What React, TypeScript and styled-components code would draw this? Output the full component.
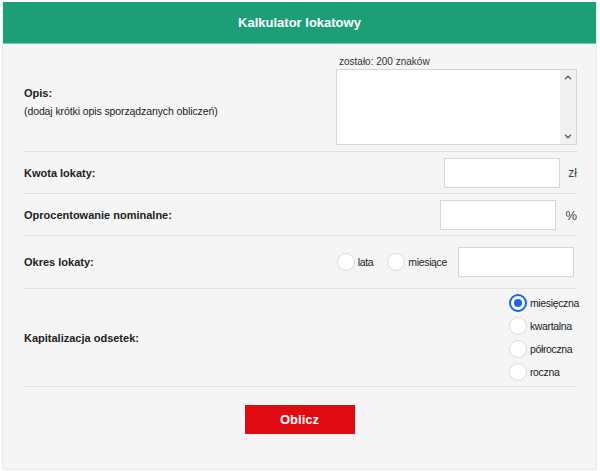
import React, { useState } from "react";
import styled, { createGlobalStyle } from "styled-components";

const Global = createGlobalStyle`
  html, body { margin: 0; padding: 0; background: #ffffff; }
  body { font-family: "Liberation Sans", Arial, sans-serif; color: #222; }
  * { box-sizing: border-box; }
`;

const Card = styled.div`
  margin: 2px 3px 0 2px;
  height: 468px;
  background: #f5f5f5;
  border: 1px solid #e9e9e9;
  border-top: none;
  display: flex;
  flex-direction: column;
`;

const Header = styled.div`
  height: 42px;
  background: #1c9f77;
  border-bottom: 1px solid #62d4ae;
  display: flex;
  align-items: center;
  justify-content: center;
  color: #fff;
  font-weight: bold;
  font-size: 13px;
`;

const Body = styled.div`
  padding: 0 19px 0 21px;
  display: flex;
  flex-direction: column;
`;

const Row = styled.div<{ $pt: number; $pb: number; $pr?: number }>`
  display: flex;
  align-items: center;
  justify-content: space-between;
  padding: ${(p) => p.$pt}px ${(p) => p.$pr ?? 0}px ${(p) => p.$pb}px 0;
  border-bottom: 1px solid #e2e2e2;
`;

const LabelBlock = styled.div`
  display: flex;
  flex-direction: column;
  padding-top: 2px;
`;

const Label = styled.div`
  font-weight: bold;
  font-size: 11px;
  line-height: 18px;
  color: #222;
`;

const Sub = styled.div`
  font-size: 10.5px;
  letter-spacing: -0.1px;
  line-height: 18px;
  color: #222;
`;

const AreaColumn = styled.div`
  display: flex;
  flex-direction: column;
  width: 241px;
`;

const Counter = styled.div`
  font-size: 10px;
  line-height: 12px;
  color: #333;
  padding-left: 3px;
  margin-bottom: 1px;
`;

const AreaBox = styled.div`
  display: flex;
  height: 76px;
  background: #fff;
  border: 1px solid #d6d6d6;
`;

const Area = styled.textarea`
  flex: 1;
  border: none;
  outline: none;
  resize: none;
  background: transparent;
  font-family: inherit;
  font-size: 11px;
  padding: 3px;
`;

const ScrollTrack = styled.div`
  width: 16px;
  background: #f1f1f1;
  display: flex;
  flex-direction: column;
  justify-content: space-between;
  align-items: center;
  padding: 5px 0;
`;

const InputGroup = styled.div<{ $gap: number }>`
  display: flex;
  align-items: center;
  gap: ${(p) => p.$gap}px;
`;

const TextInput = styled.input<{ $w: number }>`
  width: ${(p) => p.$w}px;
  height: 30px;
  background: #fff;
  border: 1px solid #d6d6d6;
  outline: none;
  font-family: inherit;
  font-size: 11px;
  padding: 0 6px;
`;

const Unit = styled.span<{ $size: number }>`
  font-size: ${(p) => p.$size}px;
  color: #444;
`;

const RadioInput = styled.input`
  appearance: none;
  margin: 0;
  width: 18px;
  height: 18px;
  border-radius: 50%;
  background: #fff;
  border: 1px solid #dcdcdc;
  display: grid;
  place-items: center;
  flex: none;
  &:checked {
    border: 2px solid #1469e0;
  }
  &:checked::after {
    content: "";
    width: 8px;
    height: 8px;
    border-radius: 50%;
    background: #1469e0;
  }
`;

const RadioLabel = styled.label`
  display: flex;
  align-items: center;
  gap: 3px;
  font-size: 10.5px;
  letter-spacing: -0.35px;
  color: #222;
`;

const InlineRadios = styled.div`
  display: flex;
  align-items: center;
  gap: 14px;
  margin-right: 11px;
`;

const RadioList = styled.div`
  display: flex;
  flex-direction: column;
  gap: 5px;
  margin-right: -2px;
`;

const Footer = styled.div`
  display: flex;
  justify-content: center;
  padding-top: 18px;
`;

const Button = styled.button`
  width: 110px;
  height: 29px;
  background: #e00b12;
  color: #fff;
  border: none;
  font-family: inherit;
  font-weight: bold;
  font-size: 13px;
  cursor: pointer;
`;

const Chevron = ({ up }: { up?: boolean }) => (
  <svg width="8" height="5" viewBox="0 0 8 5">
    <path
      d={up ? "M1 4.2 L4 1.2 L7 4.2" : "M1 0.8 L4 3.8 L7 0.8"}
      fill="none"
      stroke="#5a5a5a"
      strokeWidth="1.3"
    />
  </svg>
);

export default function App() {
  const [period, setPeriod] = useState<string>("");
  const [cap, setCap] = useState("miesieczna");
  const caps = [
    ["miesieczna", "miesięczna"],
    ["kwartalna", "kwartalna"],
    ["polroczna", "półroczna"],
    ["roczna", "roczna"],
  ];
  return (
    <>
      <Global />
      <Card>
        <Header>Kalkulator lokatowy</Header>
        <Body>
          <Row $pt={12} $pb={6}>
            <LabelBlock>
              <Label>Opis:</Label>
              <Sub>(dodaj krótki opis sporządzanych obliczeń)</Sub>
            </LabelBlock>
            <AreaColumn>
              <Counter>zostało: 200 znaków</Counter>
              <AreaBox>
                <Area />
                <ScrollTrack>
                  <Chevron up />
                  <Chevron />
                </ScrollTrack>
              </AreaBox>
            </AreaColumn>
          </Row>
          <Row $pt={6} $pb={5}>
            <Label>Kwota lokaty:</Label>
            <InputGroup $gap={8}>
              <TextInput $w={116} />
              <Unit $size={12}>zł</Unit>
            </InputGroup>
          </Row>
          <Row $pt={6} $pb={5}>
            <Label>Oprocentowanie nominalne:</Label>
            <InputGroup $gap={9}>
              <TextInput $w={116} />
              <Unit $size={13}>%</Unit>
            </InputGroup>
          </Row>
          <Row $pt={11} $pb={11} $pr={3}>
            <Label>Okres lokaty:</Label>
            <InputGroup $gap={0}>
              <InlineRadios>
                <RadioLabel>
                  <RadioInput
                    type="radio"
                    name="okres"
                    checked={period === "lata"}
                    onChange={() => setPeriod("lata")}
                  />
                  lata
                </RadioLabel>
                <RadioLabel>
                  <RadioInput
                    type="radio"
                    name="okres"
                    checked={period === "miesiace"}
                    onChange={() => setPeriod("miesiace")}
                  />
                  miesiące
                </RadioLabel>
              </InlineRadios>
              <TextInput $w={116} />
            </InputGroup>
          </Row>
          <Row $pt={5} $pb={5}>
            <Label>Kapitalizacja odsetek:</Label>
            <RadioList>
              {caps.map(([v, t]) => (
                <RadioLabel key={v}>
                  <RadioInput
                    type="radio"
                    name="kap"
                    checked={cap === v}
                    onChange={() => setCap(v)}
                  />
                  {t}
                </RadioLabel>
              ))}
            </RadioList>
          </Row>
        </Body>
        <Footer>
          <Button>Oblicz</Button>
        </Footer>
      </Card>
    </>
  );
}
